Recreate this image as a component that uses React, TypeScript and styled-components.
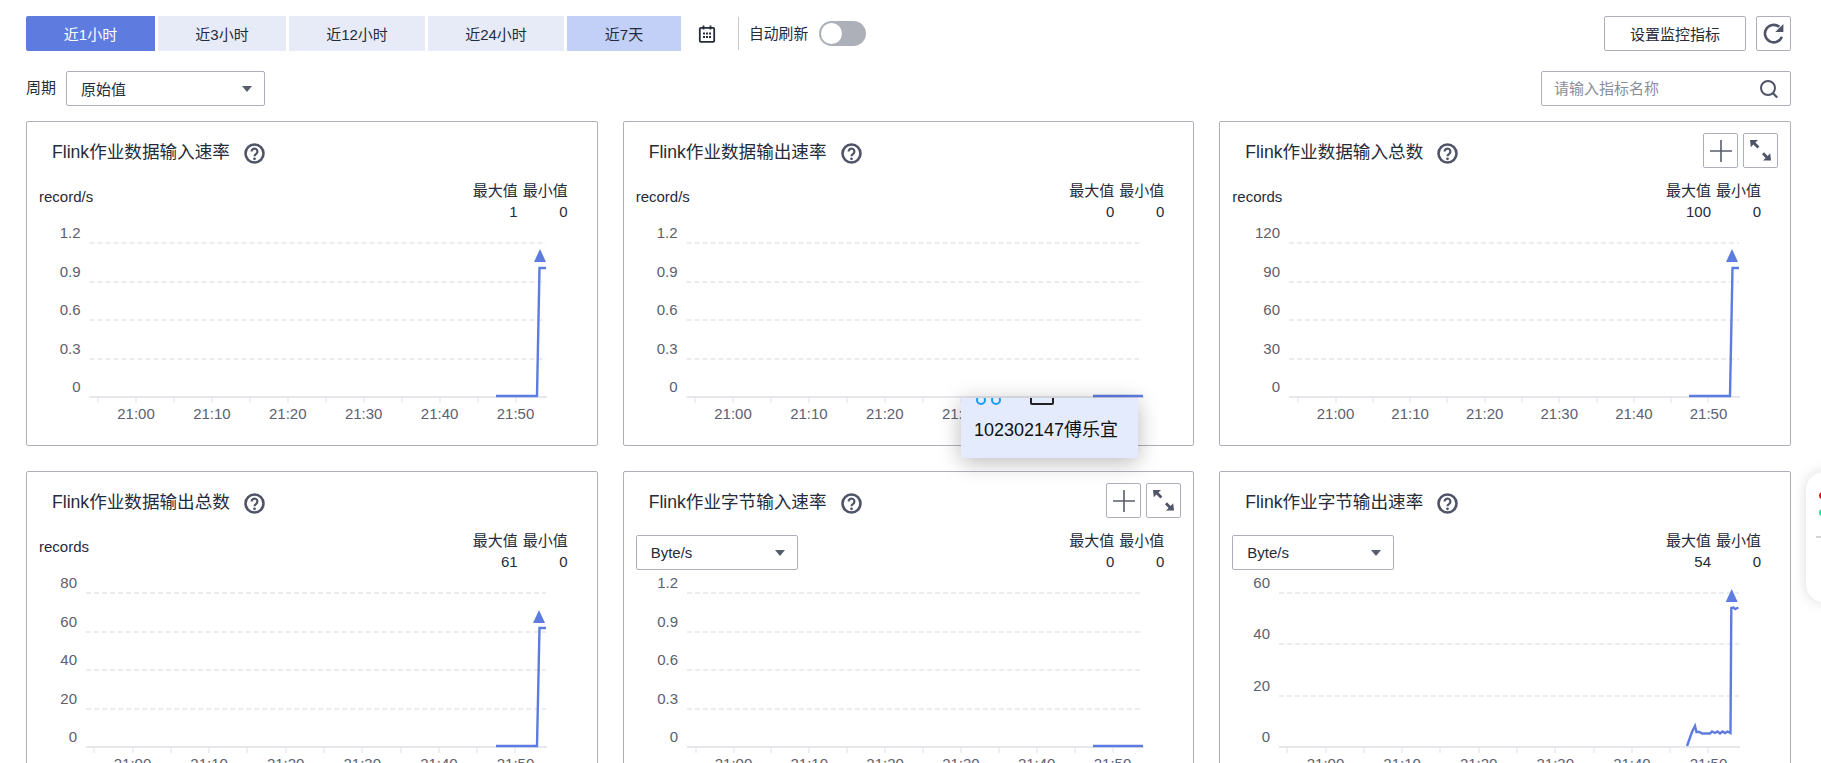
import React from "react";
import styled, { createGlobalStyle } from "styled-components";

const GlobalStyle = createGlobalStyle`
  html, body {
    margin: 0;
    padding: 0;
    background: #fff;
    overflow: hidden;
  }
  * {
    box-sizing: border-box;
  }
`;

const Page = styled.div`
  position: relative;
  width: 1821px;
  height: 763px;
  overflow: hidden;
  padding: 16px 30px 0 26px;
  font-family: "Liberation Sans", "Noto Sans CJK SC", sans-serif;
  font-size: 15.4px;
  color: #252b3a;
`;

const Toolbar = styled.div`
  display: flex;
  align-items: center;
  height: 35px;
`;

const RangeButton = styled.div<{ $w: number; $kind?: "active" | "hover" }>`
  width: ${(p) => p.$w}px;
  height: 35px;
  margin-right: 3px;
  display: flex;
  align-items: center;
  justify-content: center;
  font-size: 15px;
  background: ${(p) =>
    p.$kind === "active" ? "#5e7ce0" : p.$kind === "hover" ? "#c2cff6" : "#e7ebf8"};
  color: ${(p) => (p.$kind === "active" ? "#fff" : "#252b3a")};
  border-radius: ${(p) => (p.$kind === "active" ? "2px 0 0 2px" : "0")};
`;

const CalendarSlot = styled.div`
  width: 18px;
  height: 18px;
  margin-left: 14px;
  display: flex;
`;

const Divider = styled.div`
  width: 1px;
  height: 33px;
  margin: 0 10px 1px 22px;
  background: #c8c9cc;
`;

const AutoLabel = styled.span`
  font-size: 14.8px;
  margin-bottom: 2px;
`;

const Toggle = styled.div`
  width: 47px;
  height: 25px;
  margin-left: 11px;
  border-radius: 13px;
  background: #adb0b8;
  padding: 2px;
`;

const Knob = styled.div`
  width: 21px;
  height: 21px;
  border-radius: 50%;
  background: #fff;
`;

const OutlineButton = styled.div<{ $w: number }>`
  width: ${(p) => p.$w}px;
  height: 35px;
  border: 1px solid #adb0b8;
  border-radius: 2px;
  background: #fff;
  display: flex;
  align-items: center;
  justify-content: center;
  flex-shrink: 0;
  font-size: 15px;
`;

const SettingsButton = styled(OutlineButton)`
  margin-left: auto;
  margin-right: 10px;
`;

const FilterRow = styled.div`
  display: flex;
  align-items: center;
  height: 35px;
  margin-top: 20px;
`;

const PeriodLabel = styled.span`
  width: 40px;
  font-size: 15px;
  margin-bottom: 4px;
`;

const SelectBox = styled.div<{ $w: number }>`
  width: ${(p) => p.$w}px;
  height: 35px;
  border: 1px solid #adb0b8;
  border-radius: 2px;
  background: #fff;
  display: flex;
  align-items: center;
  justify-content: space-between;
  padding: 0 12px 0 14px;
  font-size: 15px;
  flex-shrink: 0;
`;

const Caret = styled.span`
  width: 0;
  height: 0;
  border-left: 5px solid transparent;
  border-right: 5px solid transparent;
  border-top: 6px solid #575d6c;
`;

const SearchBox = styled.div`
  width: 250px;
  height: 35px;
  margin-left: auto;
  border: 1px solid #adb0b8;
  border-radius: 2px;
  display: flex;
  align-items: center;
  padding: 0 11px 0 12px;
`;

const SearchInput = styled.input`
  flex: 1;
  min-width: 0;
  border: none;
  outline: none;
  padding: 0;
  font: inherit;
  font-size: 15px;
  color: #252b3a;
  &::placeholder {
    color: #8a8e99;
  }
`;

const CardGrid = styled.div`
  display: grid;
  grid-template-columns: repeat(3, 1fr);
  gap: 25px 25px;
  margin-top: 15px;
`;

const Card = styled.div`
  height: 325px;
  border: 1px solid #adb0b8;
  border-radius: 2px;
  background: #fff;
`;

const TitleRow = styled.div`
  display: flex;
  align-items: center;
  height: 35px;
  margin-top: 11px;
  padding: 0 12px 0 25px;
`;

const Title = styled.h3`
  margin: 3px 0 0;
  font-size: 17.6px;
  font-weight: 400;
  line-height: 24px;
  white-space: nowrap;
`;

const HelpSlot = styled.span`
  display: flex;
  margin: 5px 0 0 14px;
`;

const ToolGroup = styled.div`
  display: flex;
  gap: 5px;
  margin-left: auto;
`;

const MetaRow = styled.div`
  display: flex;
  justify-content: space-between;
  height: 42px;
  margin-top: 12px;
  padding: 0 29px 0 12px;
`;

const Unit = styled.span`
  font-size: 15px;
  line-height: 33px;
`;

const UnitSelect = styled(SelectBox)`
  margin-top: 5px;
`;

const Stats = styled.div`
  display: grid;
  grid-template-columns: auto auto;
  column-gap: 5px;
  justify-items: end;
  font-size: 15px;
  line-height: 21px;
`;

const ChartSvg = styled.svg`
  display: block;
  overflow: visible;
`;

const AxisText = styled.text`
  font-family: "Liberation Sans", sans-serif;
  font-size: 15px;
  fill: #5c6070;
`;

const Popup = styled.div`
  position: absolute;
  left: 961px;
  top: 398px;
  width: 177px;
  height: 60px;
  background: #e3ebfc;
  box-shadow: 0 4px 22px rgba(0, 0, 0, 0.28);
  border-radius: 0 0 2px 2px;
`;

const PopupIcons = styled.div`
  display: flex;
  align-items: flex-end;
  height: 7px;
  overflow: hidden;
  gap: 5px;
  padding-left: 15px;
`;

const PopupRing = styled.span`
  width: 10px;
  height: 10px;
  border: 2px solid #1e9bf0;
  border-radius: 50%;
  flex-shrink: 0;
`;

const PopupBox = styled.span`
  width: 24px;
  height: 16px;
  border: 2px solid #222;
  border-radius: 2px;
  margin-left: 24px;
  flex-shrink: 0;
`;

const PopupText = styled.div`
  margin-top: 13px;
  padding-left: 13px;
  font-size: 18px;
  line-height: 24px;
  color: #111;
  white-space: nowrap;
`;

const SideDock = styled.div`
  position: absolute;
  left: 1806px;
  top: 472px;
  width: 60px;
  height: 130px;
  padding-top: 20px;
  border-radius: 18px;
  background: #fff;
  box-shadow: 0 0 14px rgba(0, 0, 0, 0.14);
`;

const DockDot = styled.div<{ $color: string }>`
  width: 7px;
  height: 7px;
  margin: 0 0 10px 13px;
  border-radius: 50%;
  background: ${(p) => p.$color};
`;

const DockLine = styled.div`
  height: 2px;
  margin: 20px 0 0 10px;
  background: #d4d4d6;
`;

const BLUE = "#5e7ce0";
const ICON = "#4f5468";

type ChartDef = {
  title: string;
  unit: string;
  select?: boolean;
  tools?: boolean;
  max: string;
  min: string;
  yLabels: string[];
  x0: number;
  line: string;
  arrow?: [number, number];
};

// grid lines run from y 21 to the axis at y 175 in every chart
const TOP = 21;
const BOTTOM = 175;

const spike = (topY: number) => `M469,174 H510 L512.5,${topY} H519`;

const byteLine =
  "M467,174 L472,160 L475,154 L476.5,160 L479.5,160 L482,161.5 L490,161.5 L492,159.5 L495,161 L497.5,159.5 L500,161.5 L502.5,159.5 L505,161 L507.5,159.5 L510.5,161 L511.3,36 L513.5,35.5 L515,37 L518.5,35.5";

const charts: ChartDef[] = [
  {
    title: "Flink作业数据输入速率",
    unit: "record/s",
    max: "1",
    min: "0",
    yLabels: ["1.2", "0.9", "0.6", "0.3", "0"],
    x0: 62.5,
    line: spike(46),
    arrow: [513, 27],
  },
  {
    title: "Flink作业数据输出速率",
    unit: "record/s",
    max: "0",
    min: "0",
    yLabels: ["1.2", "0.9", "0.6", "0.3", "0"],
    x0: 62.5,
    line: "M469,174 H519",
  },
  {
    title: "Flink作业数据输入总数",
    unit: "records",
    tools: true,
    max: "100",
    min: "0",
    yLabels: ["120", "90", "60", "30", "0"],
    x0: 69,
    line: spike(46),
    arrow: [512, 27],
  },
  {
    title: "Flink作业数据输出总数",
    unit: "records",
    max: "61",
    min: "0",
    yLabels: ["80", "60", "40", "20", "0"],
    x0: 59,
    line: spike(56),
    arrow: [512, 38],
  },
  {
    title: "Flink作业字节输入速率",
    unit: "Byte/s",
    select: true,
    tools: true,
    max: "0",
    min: "0",
    yLabels: ["1.2", "0.9", "0.6", "0.3", "0"],
    x0: 63,
    line: "M469,174 H519",
  },
  {
    title: "Flink作业字节输出速率",
    unit: "Byte/s",
    select: true,
    max: "54",
    min: "0",
    yLabels: ["60", "40", "20", "0"],
    x0: 59,
    line: byteLine,
    arrow: [511.7, 17],
  },
];

const xLabels = ["21:00", "21:10", "21:20", "21:30", "21:40", "21:50"];

function HelpIcon() {
  return (
    <svg width="21" height="21" viewBox="0 0 21 21" fill="none">
      <circle cx="10.5" cy="10.500" r="9" stroke={ICON} strokeWidth="2.6" />
      <path
        d="M7.600 8.400a2.900 2.900 0 1 1 4.600 2.400c-1 .7-1.700 1.200-1.700 2.500"
        stroke={ICON}
        strokeWidth="2.200"
      />
      <circle cx="10.500" cy="15.800" r="1.400" fill={ICON} />
    </svg>
  );
}

function CalendarIcon() {
  return (
    <svg width="18" height="18" viewBox="0 0 18 18" fill="none">
      <rect x="1.800" y="2.800" width="14.400" height="14" rx="1" stroke="#252b3a" strokeWidth="1.800" />
      <path d="M5.500 0.500v4M12.500 0.500v4" stroke="#252b3a" strokeWidth="1.800" />
      <path
        d="M5 7.500h2v2H5zM8 7.500h2v2H8zM11 7.500h2v2h-2zM5 11h2v2H5zM8 11h2v2H8zM11 11h2v2h-2z"
        fill="#252b3a"
      />
    </svg>
  );
}

function RefreshIcon() {
  return (
    <svg width="24" height="24" viewBox="0 0 22 22" fill="none">
      <path d="M18.200 13.500A8 8 0 1 1 15.800 4.400" stroke={ICON} strokeWidth="2.400" />
      <path d="M19.600 1.800v7.400h-7.400z" fill={ICON} />
    </svg>
  );
}

function SearchIcon() {
  return (
    <svg width="20" height="20" viewBox="0 0 20 20" fill="none">
      <circle cx="9" cy="9" r="7" stroke={ICON} strokeWidth="2" />
      <path d="M13.800 14l4.400 4.600" stroke={ICON} strokeWidth="2.200" />
    </svg>
  );
}

function PlusIcon() {
  return (
    <svg width="24" height="24" viewBox="0 0 24 24" fill="none">
      <path d="M1 12h22M12 1v22" stroke="#575d6c" strokeWidth="1.600" />
    </svg>
  );
}

function ExpandIcon() {
  return (
    <svg width="33" height="33" viewBox="0 0 33 33" fill={ICON}>
      <path d="M6 6h8l-2.600 2.600 4 4-2 2-4-4L6.800 13.200z" />
      <path d="M27 26.500h-8l2.600-2.600-3.600-3.600 2-2 3.600 3.600 2.600-2.600z" />
    </svg>
  );
}

function Chart({ def }: { def: ChartDef }) {
  const x1 = 519;
  const axisLast = 488.5;
  const first = def.x0 + 46.5;
  const step = (axisLast - first) / 5;
  const gap = (BOTTOM - TOP) / (def.yLabels.length - 1);
  const ticks = Array.from({ length: 12 }, (_, i) => first - step / 2 + (i * step) / 2);

  return (
    <ChartSvg width="569" height="220" viewBox="0 0 569 220">
      {def.yLabels.map((label, i) => {
        const y = Math.round(TOP + i * gap);
        const isAxis = i === def.yLabels.length - 1;
        return (
          <g key={label}>
            <AxisText x={def.x0 - 9} y={y - 10.5} textAnchor="end" dominantBaseline="central">
              {label}
            </AxisText>
            {!isAxis && (
              <line
                x1={def.x0}
                x2={x1}
                y1={y}
                y2={y}
                stroke="#e5e6ea"
                strokeWidth="1.5"
                strokeDasharray="5 3"
              />
            )}
          </g>
        );
      })}
      <line x1={def.x0} x2={x1 + 1} y1={BOTTOM} y2={BOTTOM} stroke="#dfe1e8" strokeWidth="1.5" />
      {ticks.map((x) => (
        <line
          key={x}
          x1={Math.round(x)}
          x2={Math.round(x)}
          y1={BOTTOM}
          y2={BOTTOM + 6}
          stroke="#dfe1e8"
          strokeWidth="1"
        />
      ))}
      {xLabels.map((label, i) => (
        <AxisText key={label} x={first + i * step} y={191} textAnchor="middle" dominantBaseline="central">
          {label}
        </AxisText>
      ))}
      <path d={def.line} fill="none" stroke={BLUE} strokeWidth="2.4" />
      {def.arrow && (
        <path
          d={`M${def.arrow[0]},${def.arrow[1]} l6,13 h-12 z`}
          fill={BLUE}
        />
      )}
    </ChartSvg>
  );
}

function MetricCard({ def }: { def: ChartDef }) {
  return (
    <Card>
      <TitleRow>
        <Title>{def.title}</Title>
        <HelpSlot>
          <HelpIcon />
        </HelpSlot>
        {def.tools && (
          <ToolGroup>
            <OutlineButton $w={35}>
              <PlusIcon />
            </OutlineButton>
            <OutlineButton $w={35}>
              <ExpandIcon />
            </OutlineButton>
          </ToolGroup>
        )}
      </TitleRow>
      <MetaRow>
        {def.select ? (
          <UnitSelect $w={162}>
            {def.unit}
            <Caret />
          </UnitSelect>
        ) : (
          <Unit>{def.unit}</Unit>
        )}
        <Stats>
          <span>最大值</span>
          <span>最小值</span>
          <span>{def.max}</span>
          <span>{def.min}</span>
        </Stats>
      </MetaRow>
      <Chart def={def} />
    </Card>
  );
}

export default function App() {
  return (
    <Page>
      <GlobalStyle />
      <Toolbar>
        <RangeButton $w={129} $kind="active">近1小时</RangeButton>
        <RangeButton $w={128}>近3小时</RangeButton>
        <RangeButton $w={136}>近12小时</RangeButton>
        <RangeButton $w={136}>近24小时</RangeButton>
        <RangeButton $w={114} $kind="hover">近7天</RangeButton>
        <CalendarSlot>
          <CalendarIcon />
        </CalendarSlot>
        <Divider />
        <AutoLabel>自动刷新</AutoLabel>
        <Toggle>
          <Knob />
        </Toggle>
        <SettingsButton $w={142}>设置监控指标</SettingsButton>
        <OutlineButton $w={35}>
          <RefreshIcon />
        </OutlineButton>
      </Toolbar>
      <FilterRow>
        <PeriodLabel>周期</PeriodLabel>
        <SelectBox $w={199}>
          原始值
          <Caret />
        </SelectBox>
        <SearchBox>
          <SearchInput placeholder="请输入指标名称" />
          <SearchIcon />
        </SearchBox>
      </FilterRow>
      <CardGrid>
        {charts.map((def) => (
          <MetricCard key={def.title} def={def} />
        ))}
      </CardGrid>
      <Popup>
        <PopupIcons>
          <PopupRing />
          <PopupRing />
          <PopupBox />
        </PopupIcons>
        <PopupText>102302147傅乐宜</PopupText>
      </Popup>
      <SideDock>
        <DockDot $color="#e0101a" />
        <DockDot $color="#1be0a0" />
        <DockLine />
      </SideDock>
    </Page>
  );
}
